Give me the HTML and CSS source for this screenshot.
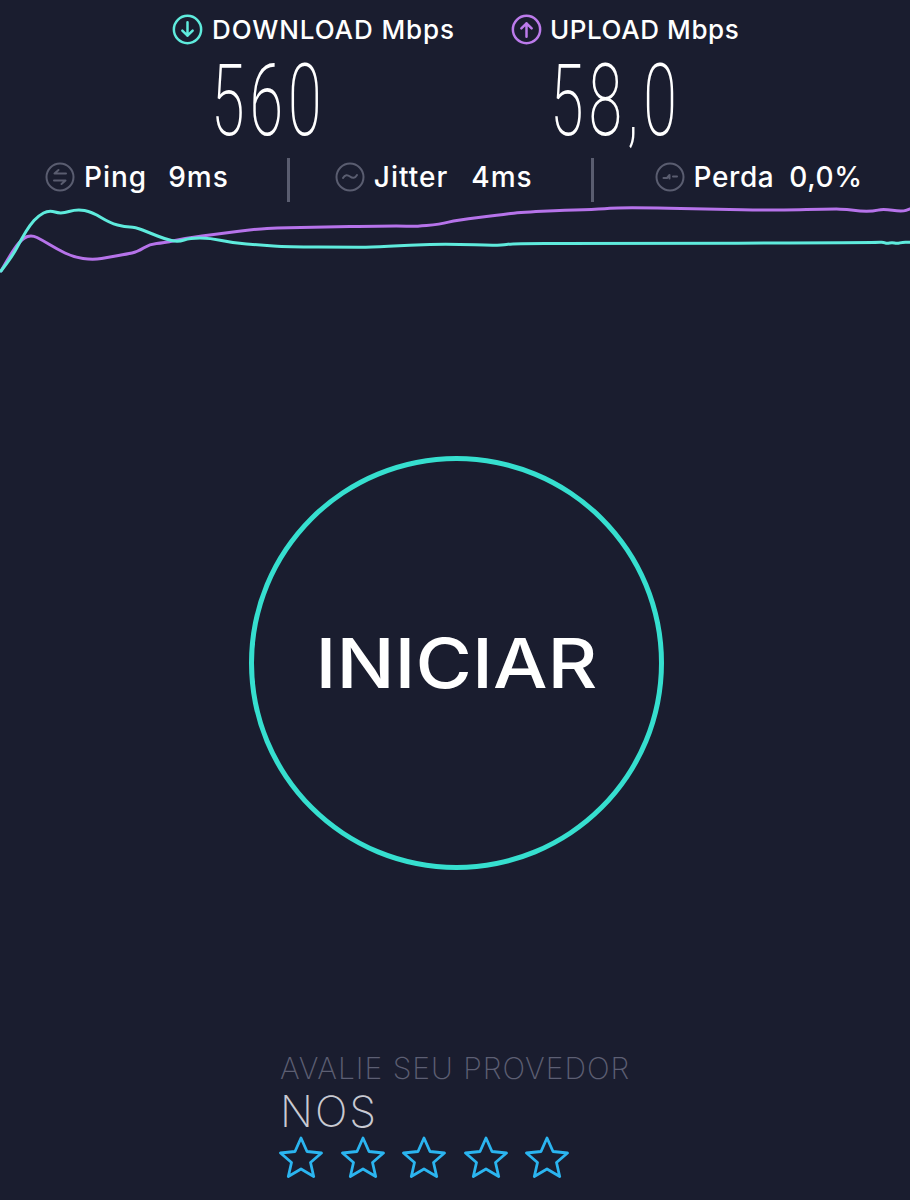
FILE: index.html
```html
<!DOCTYPE html>
<html>
<head>
	<title>Speed Test</title>
	<meta name="viewport" content="width=device-width, initial-scale=1">

	<link rel="stylesheet" href="styles.css">
</head>
<body>
	<div class="container">

		<div class="speed-labels">
			<div class="speed-label download-label">
				<svg class="speed-icon" viewBox="0 0 30 30">
					<circle cx="15" cy="15" r="13.2"/>
					<path d="M15 8v13M10 16l5 5 5-5"/>
				</svg>
				DOWNLOAD Mbps
			</div>
			<div class="speed-label upload-label">
				<svg class="speed-icon" viewBox="0 0 30 30">
					<circle cx="15" cy="15" r="13.2"/>
					<path d="M15 22V9M10 14l5-5 5 5"/>
				</svg>
				UPLOAD Mbps
			</div>
		</div>

		<div class="speed-values">
			<div class="speed-value download-value"><span>560</span></div>
			<div class="speed-value upload-value"><span>58,0</span></div>
		</div>

		<div class="stats">
			<div class="stat ping-stat">
				<svg class="stat-icon" viewBox="0 0 30 30">
					<circle cx="15" cy="15" r="13.5"/>
					<path d="M21 11.5H9.5l4-3.5M9 18.5h11.500l-4 3.500"/>
				</svg>
				<span class="stat-name">Ping</span>
				<span class="stat-value">9ms</span>
			</div>
			<div class="divider"></div>
			<div class="stat jitter-stat">
				<svg class="stat-icon" viewBox="0 0 30 30">
					<circle cx="15" cy="15" r="13.5"/>
					<path d="M8 16c2-3.500 4.500-3.500 7-1.500s5 2 7-1.500"/>
				</svg>
				<span class="stat-name">Jitter</span>
				<span class="stat-value">4ms</span>
			</div>
			<div class="divider"></div>
			<div class="stat loss-stat">
				<svg class="stat-icon" viewBox="0 0 30 30">
					<circle cx="15" cy="15" r="13.5"/>
					<path d="M8.500 16h3.500l2.500-3v3.500M18 14.500h4"/>
				</svg>
				<span class="stat-name">Perda</span>
				<span class="stat-value">0,0%</span>
			</div>
		</div>

		<svg class="graph" viewBox="0 205 910 70">
			<path class="upload-line" id="upload-line"/>
			<path class="download-line" id="download-line"/>
		</svg>

		<div class="start-area">
			<div class="start-button"><span>INICIAR</span></div>
		</div>

		<div class="rating">
			<div class="rating-title">AVALIE SEU PROVEDOR</div>
			<div class="rating-provider">NOS</div>
			<div class="stars">
				<svg class="star" viewBox="0 0 44 42"><path d="M22 2l6 13.500 14.500 1.500-11 9.500 3.200 14L22 33l-12.700 7.500 3.200-14-11-9.500L16 15.500z"/></svg>
				<svg class="star" viewBox="0 0 44 42"><path d="M22 2l6 13.500 14.500 1.500-11 9.500 3.200 14L22 33l-12.700 7.500 3.200-14-11-9.500L16 15.500z"/></svg>
				<svg class="star" viewBox="0 0 44 42"><path d="M22 2l6 13.500 14.500 1.500-11 9.500 3.200 14L22 33l-12.700 7.500 3.200-14-11-9.500L16 15.500z"/></svg>
				<svg class="star" viewBox="0 0 44 42"><path d="M22 2l6 13.500 14.500 1.500-11 9.500 3.200 14L22 33l-12.700 7.500 3.200-14-11-9.500L16 15.500z"/></svg>
				<svg class="star" viewBox="0 0 44 42"><path d="M22 2l6 13.500 14.500 1.500-11 9.500 3.200 14L22 33l-12.700 7.500 3.200-14-11-9.500L16 15.500z"/></svg>
			</div>
		</div>

	</div> <!-- .container -->

	<script src="graph.js"></script>
</body>
</html>
```

FILE: styles.css
```css
html, body {
	margin: 0;
	background-color: #1A1D2F;
}

.container {
	width: 910px;
	height: 1200px;
	overflow: hidden;
	font-family: "Inter", "Liberation Sans", sans-serif;
	color: #FFF;
}

/* top labels */
.speed-labels {
	display: flex;
	padding: 14px 0 0 172px;
	height: 31px;
}
.speed-label {
	display: flex;
	align-items: center;
	gap: 9px;
	font-size: 26px;
	font-weight: 500;
	letter-spacing: 0.9px;
	white-space: nowrap;
}
.upload-label {
	margin-left: 56px;
	gap: 8px;
	letter-spacing: 0.6px;
}
.speed-icon {
	width: 31px;
	height: 31px;
	fill: none;
	stroke-width: 2.4;
	stroke-linecap: round;
	stroke-linejoin: round;
}
.download-label .speed-icon {
	stroke: #5FEBDD;
}
.upload-label .speed-icon {
	stroke: #BC7BEB;
}

/* big numbers */
.speed-values {
	display: flex;
	height: 84px;
	padding: 9px 0 0 211px;
}
.speed-value {
	font-family: "Roboto", sans-serif;
	font-size: 100px;
	font-weight: 200;
	line-height: 93px;
	letter-spacing: 8px;
	width: 339px;
}
.speed-value span {
	display: inline-block;
	transform: scaleX(0.61);
	transform-origin: left center;
}

/* ping, jitter, loss */
.stats {
	display: flex;
	align-items: center;
	height: 44px;
	margin-top: 20px;
	padding-left: 45px;
}
.stat {
	display: flex;
	align-items: center;
	margin-bottom: 6px;
	font-size: 28px;
	font-weight: 500;
	letter-spacing: 1px;
}
.stat-icon {
	width: 30px;
	height: 30px;
	margin-right: 9px;
	fill: none;
	stroke: #5A5D70;
	stroke-width: 2;
	stroke-linecap: round;
	stroke-linejoin: round;
}
.stat-value {
	margin-left: 21px;
}
.jitter-stat .stat-value {
	margin-left: 23px;
}
.divider {
	width: 3px;
	height: 44px;
	background-color: #5A5D70;
	margin: 0 45px 0 58px;
}
.loss-stat {
	margin-left: 16px;
	letter-spacing: 0.6px;
}
.loss-stat .stat-value {
	margin-left: 15px;
}

.graph {
	display: block;
	width: 910px;
	height: 70px;
	margin-top: 3px;
	fill: none;
	stroke-width: 3;
	stroke-linejoin: round;
	stroke-linecap: round;
}
.upload-line {
	stroke: #B673EA;
}
.download-line {
	stroke: #5FEBDD;
}

/* start button */
.start-area {
	display: flex;
	padding: 181px 0 0 249px;
}
.start-button {
	display: flex;
	align-items: center;
	justify-content: center;
	box-sizing: border-box;
	width: 415px;
	height: 414px;
	border: 5px solid #36DFCF;
	border-radius: 50%;
	font-size: 69px;
	font-weight: 500;
}
.start-button span {
	display: inline-block;
	transform: scaleX(1.115);
}

/* provider rating */
.rating {
	margin: 181px 0 0 280px;
}
.rating-title {
	font-size: 30px;
	font-weight: 200;
	line-height: 34px;
	letter-spacing: 1px;
	color: #5D5F73;
	white-space: nowrap;
}
.rating-provider {
	font-size: 43px;
	font-weight: 200;
	line-height: 52px;
	letter-spacing: 2px;
	color: #C9CAD2;
}
.stars {
	display: flex;
	gap: 17.5px;
	margin: -1px 0 0 -1px;
}
.star {
	width: 44px;
	height: 42px;
	fill: none;
	stroke: #2BB5F0;
	stroke-width: 2.8;
	stroke-linejoin: round;
}
```

FILE: graph.js
```js
// x,y samples for the two speed curves, in page pixels
var uploadPoints = [[1,271],[13,250],[23,238],[32,235],[42,240],[57,249],[73,257],[93,260],[110,257],[127,254],[137,252],[150,244],[163,243],[187,238],[217,234],[257,229],[277,228],[300,227.5],[400,225.7],[413,226.7],[440,224.3],[457,220],[500,215],[517,212.7],[567,210],[600,209.3],[620,207.3],[717,209],[767,210.3],[833,209],[847,209.3],[860,211.3],[873,211.3],[883,209],[902,211.7],[910,209]];
var downloadPoints = [[1,271],[12,257],[22,238],[30,225],[38,216],[49,210],[61,214],[77,209],[92,212],[110,223],[125,227],[135,227],[150,233],[165,239],[178,242],[190,238],[210,238],[233,243],[260,245],[287,247],[350,247],[367,247.3],[410,245],[450,244],[500,245.7],[513,243.3],[600,243.7],[877,242.7],[883,242],[887,243.7],[892,242.3],[897,243.7],[903,242],[910,242.3]];

// smooth the line by curving through the midpoints
function smoothPath(points) {
	var d = "M" + points[0][0] + " " + points[0][1];
	for(var i = 1; i < points.length - 1; i++) {
		var midX = (points[i][0] + points[i + 1][0]) / 2;
		var midY = (points[i][1] + points[i + 1][1]) / 2;
		d += " Q" + points[i][0] + " " + points[i][1] + " " + midX + " " + midY;
	}
	var last = points[points.length - 1];
	return d + " L" + last[0] + " " + last[1];
}

document.querySelector("#upload-line").setAttribute("d", smoothPath(uploadPoints));
document.querySelector("#download-line").setAttribute("d", smoothPath(downloadPoints));
```
